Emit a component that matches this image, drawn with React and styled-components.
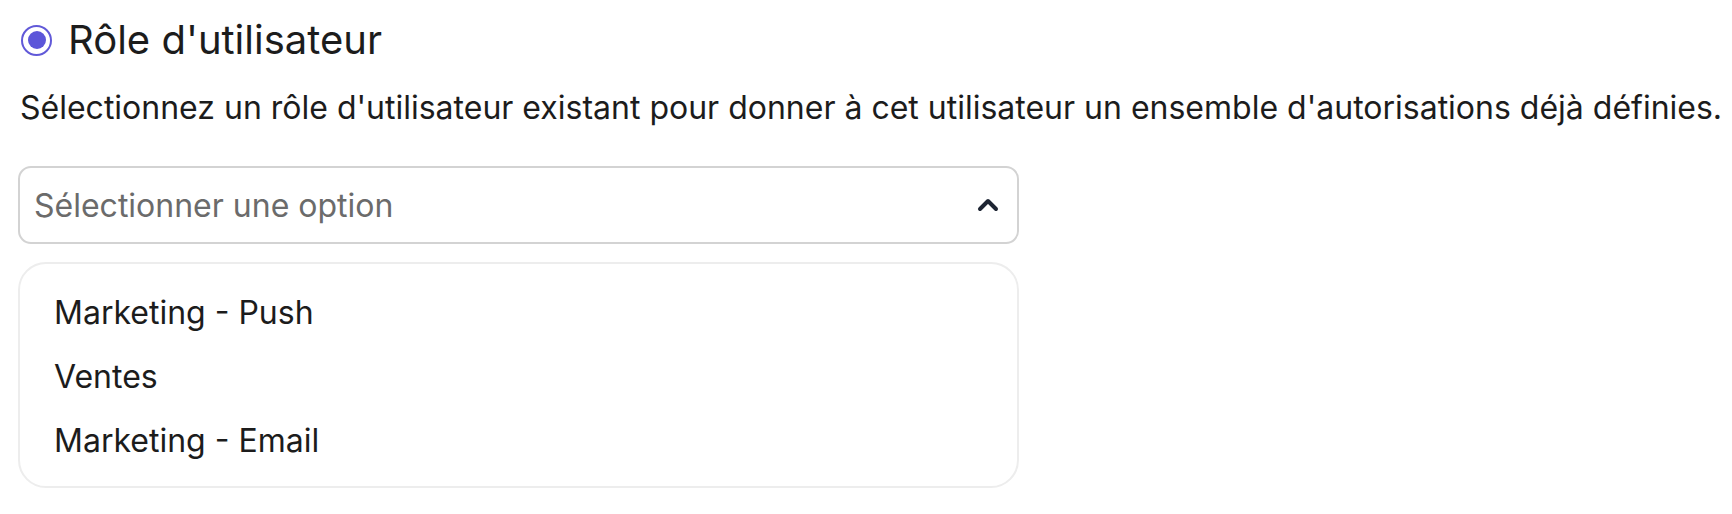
import React from "react";
import styled, { createGlobalStyle } from "styled-components";

const Global = createGlobalStyle`
  html, body { margin: 0; padding: 0; background: #ffffff; }
  body { font-family: Inter, "Noto Sans", sans-serif; color: #1c1c1c; }
`;

const Page = styled.div`
  padding: 18px 18px 0 20px;
  display: flex;
  flex-direction: column;
`;

const TitleRow = styled.label`
  display: flex;
  align-items: center;
  gap: 16px;
  height: 44px;
`;

const Radio = styled.span`
  box-sizing: border-box;
  width: 31px;
  height: 31px;
  border-radius: 50%;
  border: 2.5px solid #6159d8;
  display: flex;
  align-items: center;
  justify-content: center;
  flex: none;
  margin-left: 1px;
  &::after {
    content: "";
    width: 18px;
    height: 18px;
    border-radius: 50%;
    background: #5c56d9;
  }
`;

const Title = styled.span`
  font-size: 40px;
  line-height: 44px;
  color: #1c1c1c;
`;

const Description = styled.p`
  margin: 26px 0 0;
  font-size: 32px;
  line-height: 40px;
  color: #1c1c1c;
  white-space: nowrap;
`;

const Field = styled.div`
  width: 1001px;
  margin-top: 38px;
  margin-left: -2px;
  display: flex;
  flex-direction: column;
  gap: 18px;
`;

const Trigger = styled.button`
  box-sizing: border-box;
  height: 78px;
  width: 100%;
  border: 2px solid #d3d3d3;
  border-radius: 13px;
  background: #fff;
  display: flex;
  align-items: center;
  justify-content: space-between;
  padding: 0 18px 0 14px;
  font-family: inherit;
  cursor: pointer;
`;

const Placeholder = styled.span`
  font-size: 32px;
  color: #6b6b6b;
`;

const Menu = styled.ul`
  box-sizing: border-box;
  margin: 0;
  list-style: none;
  width: 100%;
  height: 226px;
  border: 2px solid #ededed;
  border-radius: 28px;
  padding: 16px 0 14px;
  display: flex;
  flex-direction: column;
`;

const Option = styled.li`
  height: 64px;
  display: flex;
  align-items: center;
  padding: 0 34px;
  font-size: 32px;
  color: #1c1c1c;
`;

const Chevron = () => (
  <svg width="22" height="14" viewBox="0 0 22 14" fill="none">
    <path d="M3 11 L11 3 L19 11" stroke="#1e2533" strokeWidth="4" strokeLinecap="round" strokeLinejoin="round" />
  </svg>
);

const options = ["Marketing - Push", "Ventes", "Marketing - Email"];

export default function App() {
  return (
    <>
      <Global />
      <Page>
        <TitleRow>
          <Radio />
          <Title>Rôle d'utilisateur</Title>
        </TitleRow>
        <Description>
          Sélectionnez un rôle d'utilisateur existant pour donner à cet utilisateur un ensemble d'autorisations déjà définies.
        </Description>
        <Field>
          <Trigger type="button">
            <Placeholder>Sélectionner une option</Placeholder>
            <Chevron />
          </Trigger>
          <Menu>
            {options.map((o) => (
              <Option key={o}>{o}</Option>
            ))}
          </Menu>
        </Field>
      </Page>
    </>
  );
}
